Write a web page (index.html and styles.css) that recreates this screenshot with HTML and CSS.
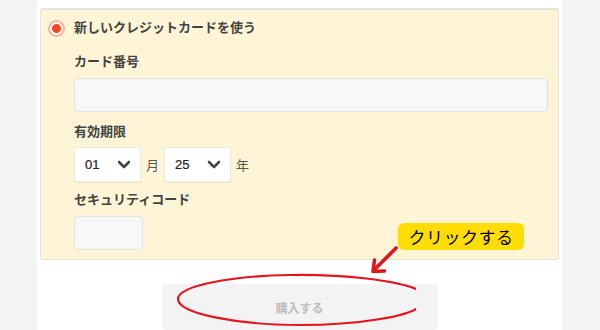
FILE: index.html
```html
<!DOCTYPE html>
<html lang="ja">
<head>
<meta charset="utf-8">
<link rel="stylesheet" href="styles.css">
</head>
<body>
<div class="page">
  <div class="column">
    <div class="panel">
      <div class="title-row">
        <span class="radio"><span class="dot"></span></span>
        <span class="title">新しいクレジットカードを使う</span>
      </div>
      <div class="fields">
        <div class="label l-card">カード番号</div>
        <div class="input card-input"></div>
        <div class="label l-exp">有効期限</div>
        <div class="exp-row">
          <div class="select"><span>01</span><svg class="chev" width="14" height="9" viewBox="0 0 14 9"><path d="M2 2 L7 7 L12 2" fill="none" stroke="#444" stroke-width="2.6" stroke-linecap="round" stroke-linejoin="round"/></svg></div>
          <span class="unit">月</span>
          <div class="select"><span>25</span><svg class="chev" width="14" height="9" viewBox="0 0 14 9"><path d="M2 2 L7 7 L12 2" fill="none" stroke="#444" stroke-width="2.6" stroke-linecap="round" stroke-linejoin="round"/></svg></div>
          <span class="unit">年</span>
        </div>
        <div class="label l-sec">セキュリティコード</div>
        <div class="input sec-input"></div>
      </div>
    </div>
    <div class="btn-wrap">
      <div class="buy">購入する</div>
    </div>
  </div>
  <div class="badge">クリックする</div>
  <svg class="marks" width="600" height="330" viewBox="0 0 600 330">
    <defs>
      <clipPath id="cut"><rect x="0" y="0" width="416" height="330"/></clipPath>
    </defs>
    <path d="M396 248 L374 270" stroke="#e3141c" stroke-width="3.6" stroke-linecap="round" fill="none"/>
    <path d="M374.5 260 L373 271.5 L384.5 271" stroke="#e3141c" stroke-width="3.6" stroke-linecap="round" stroke-linejoin="round" fill="none"/>
    <g clip-path="url(#cut)">
      <path d="M420 291 C400 280 340 274 290 275 C230 276 178 286 178 299 C178 314 240 325 300 325 C360 325 410 316 420 306" stroke="#e3141c" stroke-width="2.2" fill="none"/>
    </g>
  </svg>
</div>
</body>
</html>
```

FILE: styles.css
```css
html, body {
  margin: 0;
  padding: 0;
}
body {
  background: #f3f3f3;
  font-family: "Noto Sans CJK JP", "Noto Sans", sans-serif;
  color: #444;
}
.page {
  position: relative;
  width: 600px;
  height: 330px;
  overflow: hidden;
}
.column {
  margin-left: 37px;
  width: 525px;
  height: 330px;
  background: #fff;
  padding: 8px 3px 0 3px;
  box-sizing: border-box;
}
.panel {
  width: 519px;
  box-sizing: border-box;
  background: #fef5d6;
  border: 1px solid #e6e3da;
  border-top: 2px solid #e4e4e2;
  border-radius: 3px;
  padding: 0 0 9px 0;
}
.title-row {
  display: flex;
  align-items: center;
  height: 20px;
  margin-top: 7px;
  padding-left: 7px;
}
.radio {
  width: 17px;
  height: 17px;
  box-sizing: border-box;
  border: 2px solid #f7b5a2;
  border-radius: 50%;
  background: #fff;
  display: flex;
  align-items: center;
  justify-content: center;
  margin-top: 3px;
}
.dot {
  width: 9px;
  height: 9px;
  border-radius: 50%;
  background: #f24a20;
}
.title {
  margin-left: 9px;
  font-size: 13px;
  font-weight: 700;
  line-height: 20px;
}
.fields {
  padding-left: 33px;
}
.label {
  font-size: 13px;
  font-weight: 700;
  line-height: 20px;
  height: 20px;
}
.l-card { margin-top: 14px; }
.l-exp { margin-top: 9px; }
.l-sec { margin-top: 7px; }
.input {
  box-sizing: border-box;
  height: 34px;
  background: #f8f8f8;
  border: 1px solid #e2e2e2;
  border-radius: 4px;
  margin-top: 7px;
}
.card-input { width: 474px; }
.sec-input { width: 69px; }
.exp-row {
  display: flex;
  align-items: center;
  gap: 5px;
  margin-top: 6px;
  height: 35px;
}
.select {
  box-sizing: border-box;
  width: 67px;
  height: 35px;
  background: #fff;
  border: 1px solid #ebe8e0;
  border-radius: 2px;
  box-shadow: 0 1px 1px rgba(0,0,0,0.06);
  display: flex;
  align-items: center;
  justify-content: space-between;
  padding: 0 9px 0 10px;
  font-family: "Liberation Sans", Arial, sans-serif;
  font-size: 13px;
  color: #222;
  -webkit-text-stroke: 0.2px #222;
}
.chev { display: block; }
.unit {
  font-size: 13px;
  font-weight: 400;
  width: 13px;
  color: #555;
}
.btn-wrap {
  display: flex;
  justify-content: center;
  margin-top: 24px;
}
.buy {
  width: 276px;
  height: 46px;
  border-radius: 4px;
  background: #f3f3f3;
  display: flex;
  align-items: center;
  justify-content: center;
  font-size: 12px;
  font-weight: 700;
  color: #bdbdbd;
}
.badge {
  position: absolute;
  left: 398px;
  top: 223px;
  width: 126px;
  height: 27px;
  box-sizing: border-box;
  background: #ffdd00;
  border-radius: 6px;
  display: flex;
  align-items: center;
  justify-content: center;
  font-size: 17px;
  font-weight: 400;
  letter-spacing: 0.5px;
  color: #000;
}
.marks {
  position: absolute;
  left: 0;
  top: 0;
  pointer-events: none;
}
```
